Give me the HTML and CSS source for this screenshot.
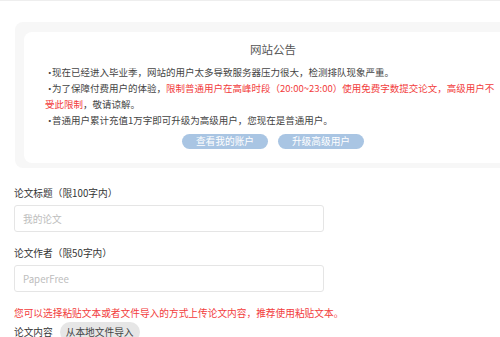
FILE: index.html
```html
<!DOCTYPE html>
<html lang="zh-CN">
<head>
    <meta charset="utf-8">
    <title>提交论文</title>
    <link rel="stylesheet" href="styles.css">
</head>
<body>
    <div class="page">
        <div class="notice-wrap">
            <div class="notice">
                <h3>网站公告</h3>
                <p><span class="dot">•</span>现在已经进入毕业季，网站的用户太多导致服务器压力很大，检测排队现象严重。</p>
                <p><span class="dot">•</span>为了保障付费用户的体验，<span class="red">限制普通用户在高峰时段（20:00~23:00）使用免费字数提交论文，高级用户不受此限制</span>，敬请谅解。</p>
                <p><span class="dot">•</span>普通用户累计充值1万字即可升级为高级用户，您现在是普通用户。</p>
                <div class="notice-btns">
                    <a class="btn-blue">查看我的账户</a>
                    <a class="btn-blue">升级高级用户</a>
                </div>
            </div>
        </div>

        <form class="paper-form">
            <label class="field-label">论文标题（限100字内）</label>
            <input class="field-input" type="text" placeholder="我的论文">

            <label class="field-label">论文作者（限50字内）</label>
            <input class="field-input" type="text" placeholder="PaperFree">

            <p class="tip">您可以选择粘贴文本或者文件导入的方式上传论文内容，推荐使用粘贴文本。</p>
            <div class="content-row">
                <span class="content-label">论文内容</span>
                <a class="btn-gray">从本地文件导入</a>
            </div>
        </form>
    </div>
</body>
</html>
```

FILE: styles.css
```css
body {
    margin: 0;
    overflow: hidden;
    background: #fff;
    font-family: "Noto Sans CJK SC", "Noto Sans", sans-serif;
    font-size: 9.7px;
    color: #444;
}
.page {
    width: 560px;
    border-top: 1px solid #eee;
    padding-top: 21px;
}
.notice-wrap {
    margin-left: 15px;
    width: 498px;
    background: #f7f7f7;
    border-radius: 8px;
    padding: 10px 9px 5px 9px;
}
.notice {
    background: #fff;
    border-radius: 8px;
    padding: 9px 21px 14px 21px;
}
.notice h3 {
    margin: 0 0 7px 0;
    text-align: center;
    font-size: 11.5px;
    font-weight: normal;
    line-height: 16px;
    color: #555;
}
.notice p {
    margin: 0;
    font-size: 9.5px;
    line-height: 16px;
    color: #444;
}
.dot {
    display: inline-block;
    width: 7px;
}
.red {
    color: #f23c3c;
}
.notice-btns {
    display: flex;
    justify-content: center;
    gap: 10px;
    margin-top: 6px;
}
.btn-blue {
    width: 86px;
    height: 15px;
    line-height: 15px;
    border-radius: 8px;
    background: #a9c5e3;
    color: #fff;
    text-align: center;
}
.paper-form {
    margin: 17px 0 0 14px;
}
.field-label {
    display: block;
    line-height: 16px;
    color: #333;
}
.field-input {
    display: block;
    box-sizing: border-box;
    width: 310px;
    height: 27px;
    margin: 4px 0 13px 0;
    padding: 0 8px;
    border: 1px solid #e5e5e5;
    border-radius: 3px;
    font-family: inherit;
    font-size: 9.7px;
    outline: none;
}
.field-input::placeholder {
    color: #bdbdbd;
}
.tip {
    margin: 0;
    line-height: 16px;
    color: #f23c3c;
}
.content-row {
    display: flex;
    align-items: center;
    gap: 7px;
    height: 22px;
}
.content-label {
    color: #333;
}
.btn-gray {
    padding: 0 6px;
    height: 20px;
    line-height: 20px;
    border-radius: 10px;
    background: #e6e6e6;
    color: #444;
}
```
